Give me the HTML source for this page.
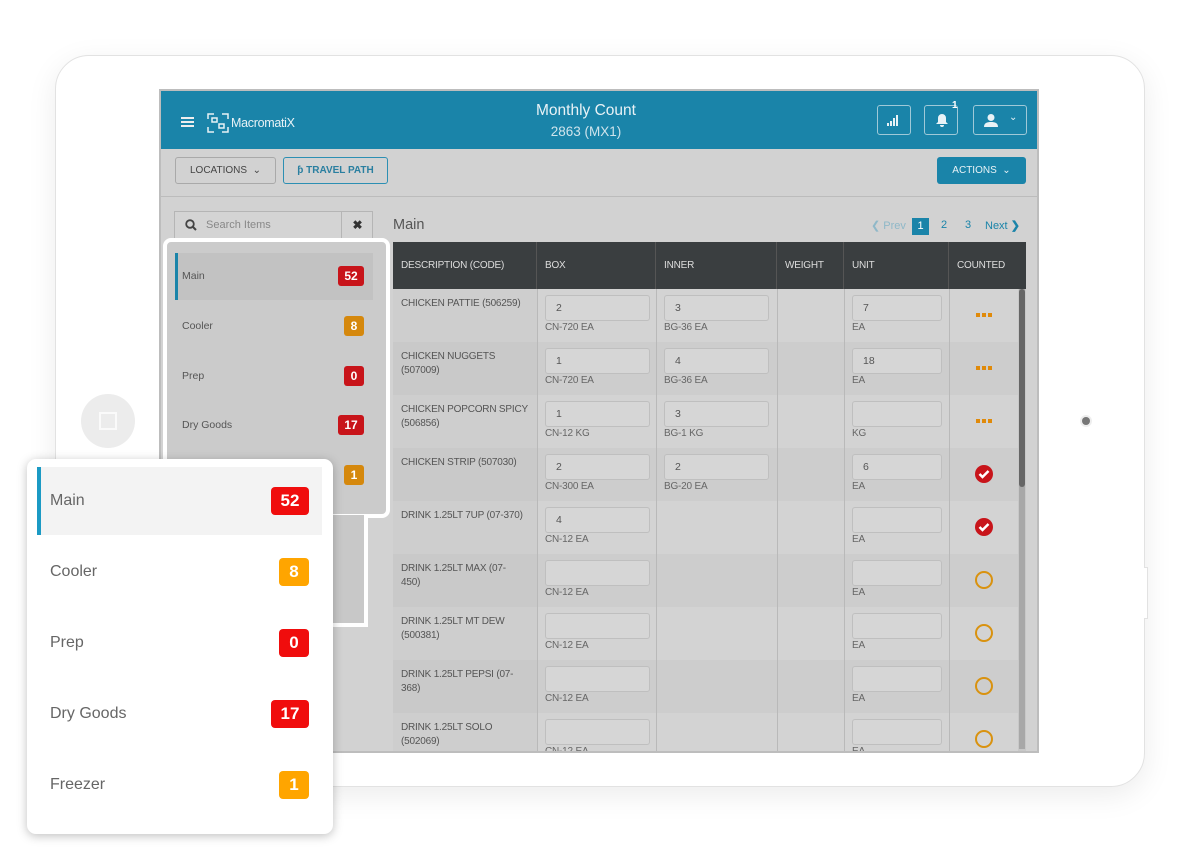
<!DOCTYPE html>
<html><head><meta charset="utf-8"><style>
*{box-sizing:border-box;margin:0;padding:0}
body{width:1200px;height:848px;background:#fff;position:relative;overflow:hidden;font-family:"Liberation Sans",sans-serif;color:#555}
.a{position:absolute}
.dev{left:55px;top:55px;width:1090px;height:732px;border:1px solid #e2e2e2;border-radius:34px;background:#fff;box-shadow:0 8px 30px rgba(0,0,0,.08)}
.scr{left:159px;top:89px;width:880px;height:664px;background:#d2d2d2;border:2px solid #bdbdbd;overflow:hidden}
.hdr{left:0;top:0;width:876px;height:58px;background:#1a84a9;color:#e8f2f6}
.btn{border:1px solid #a9a9a9;border-radius:3px;font-size:10px;color:#444;background:#d2d2d2;text-align:center;line-height:25px}
.ib{border:1px solid #9fc9d8;border-radius:3px;width:34px;height:30px;top:14px}
.th{position:absolute;top:0;height:47px;line-height:47px;font-size:10px;color:#ddd;padding-left:8px;border-right:1px solid #555;letter-spacing:-.2px}
.cell{font-size:10px;color:#555;letter-spacing:-.2px}
.in{position:absolute;width:105px;height:26px;border:1px solid #bfbfbf;border-radius:3px;background:#d6d6d6;font-size:10.5px;line-height:24px;padding-left:10px;color:#555}
.sub{position:absolute;font-size:10px;color:#666;letter-spacing:-.2px}
.bd{position:absolute;height:20px;border-radius:3px;color:#fff;font-weight:bold;font-size:12px;text-align:center;line-height:20px}
.bg{position:absolute;height:28px;border-radius:4px;color:#fff;font-weight:bold;font-size:17px;text-align:center;line-height:28px}
.li{position:absolute;left:23px;font-size:16px;color:#666}
</style></head><body>
<div class="a dev"></div>
<div class="a" style="left:1144px;top:567px;width:4px;height:52px;border:1px solid #e2e2e2;border-left:none;background:#fff"></div>
<div class="a" style="left:81px;top:394px;width:54px;height:54px;border-radius:50%;background:#ececec"></div>
<div class="a" style="left:99px;top:412px;width:18px;height:18px;border:2px solid #fafafa"></div>
<div class="a" style="left:1080px;top:415px;width:12px;height:12px;border-radius:50%;background:#eee"></div>
<div class="a" style="left:1082px;top:417px;width:8px;height:8px;border-radius:50%;background:#777"></div>

<div class="a scr">
 <div class="a hdr">
  <div class="a" style="left:20px;top:26px;width:13px;height:2px;background:#eee;box-shadow:0 4px 0 #eee,0 8px 0 #eee"></div>
  <svg class="a" style="left:46px;top:22px" width="22" height="20" viewBox="0 0 22 20" fill="none" stroke="#e8f2f6" stroke-width="1.5"><path d="M1 6V1h6M15 1h6v5M21 14v5h-6M7 19H1v-5M5 5h5v4H5zM12 11h5v4h-5z"/></svg>
  <div class="a" style="left:70px;top:25px;font-size:12.5px;letter-spacing:-.3px">MacromatiX</div>
  <div class="a" style="left:330px;top:11px;width:190px;text-align:center;font-size:15.5px">Monthly Count</div>
  <div class="a" style="left:330px;top:33px;width:190px;text-align:center;font-size:13.5px;color:#cfe4ec">2863 (MX1)</div>
  <div class="a ib" style="left:716px"><svg class="a" style="left:9px;top:8px" width="14" height="12"><rect x="0" y="9" width="2" height="3" fill="#e8f2f6"/><rect x="3" y="7" width="2" height="5" fill="#e8f2f6"/><rect x="6" y="4" width="2" height="8" fill="#e8f2f6"/><rect x="9" y="1" width="2" height="11" fill="#e8f2f6"/></svg></div>
  <div class="a ib" style="left:763px"><svg class="a" style="left:10px;top:7px" width="14" height="15"><path d="M7 1a4 4 0 0 1 4 4v4l2 2H1l2-2V5a4 4 0 0 1 4-4zM5 12h4a2 2 0 0 1-4 0z" fill="#e8f2f6"/></svg></div>
  <div class="a" style="left:791px;top:9px;font-size:10px;color:#fff;font-weight:bold">1</div>
  <div class="a ib" style="left:812px;width:54px"><svg class="a" style="left:10px;top:7px" width="14" height="14"><circle cx="7" cy="4.5" r="3.5" fill="#e8f2f6"/><path d="M0 14c0-4 3-5 7-5s7 1 7 5z" fill="#e8f2f6"/></svg><div class="a" style="left:35px;top:6px;font-size:10px">&#8964;</div></div>
 </div>
 <div class="a btn" style="left:14px;top:66px;width:101px;height:27px">LOCATIONS &nbsp;&#8964;</div>
 <div class="a btn" style="left:122px;top:66px;width:105px;height:27px;border-color:#2c8fb3;color:#2a7fa0;font-weight:bold">&#421; TRAVEL PATH</div>
 <div class="a" style="left:776px;top:66px;width:89px;height:27px;background:#1a84a9;border-radius:3px;color:#e8f2f6;font-size:10px;line-height:27px;text-align:center">ACTIONS &nbsp;&#8964;</div>
 <div class="a" style="left:0;top:105px;width:876px;height:1px;background:#bcbcbc"></div>
 <div class="a" style="left:13px;top:120px;width:199px;height:28px;border:1px solid #b5b5b5;background:#d4d4d4"></div>
 <div class="a" style="left:180px;top:120px;width:32px;height:28px;border-left:1px solid #b5b5b5;text-align:center;line-height:28px;font-size:12px;font-weight:bold;color:#333">&#10006;</div>
 <svg class="a" style="left:24px;top:128px" width="12" height="12"><circle cx="5" cy="5" r="3.8" stroke="#444" stroke-width="1.8" fill="none"/><path d="M8 8l3 3" stroke="#444" stroke-width="2"/></svg>
 <div class="a" style="left:45px;top:128px;font-size:11px;color:#888">Search Items</div>
 <div class="a" style="left:232px;top:126px;font-size:14.5px;color:#555">Main</div>
 <div class="a" style="left:710px;top:128px;font-size:11px;color:#8fb8c8">&#10094; Prev</div>
 <div class="a" style="left:751px;top:127px;width:17px;height:17px;background:#1a84a9;color:#fff;font-size:11px;text-align:center;line-height:17px">1</div>
 <div class="a" style="left:780px;top:128px;font-size:11px;color:#1a84a9">2</div>
 <div class="a" style="left:804px;top:128px;font-size:11px;color:#1a84a9">3</div>
 <div class="a" style="left:824px;top:128px;font-size:11px;color:#1a84a9">Next <b>&#10095;</b></div>

 <div class="a" style="left:232px;top:151px;width:633px;height:520px;overflow:hidden">
  <div class="a" style="left:0;top:0;width:633px;height:47px;background:#3a3e40"></div>
  <div class="th" style="left:0;width:144px">DESCRIPTION (CODE)</div>
  <div class="th" style="left:144px;width:119px">BOX</div>
  <div class="th" style="left:263px;width:121px">INNER</div>
  <div class="th" style="left:384px;width:67px">WEIGHT</div>
  <div class="th" style="left:451px;width:105px">UNIT</div>
  <div class="th" style="left:556px;width:77px;border:none">COUNTED</div>
  <div id="rows"></div>
 </div>
</div>

<div class="a" style="left:163px;top:238px;width:227px;height:280px;border:4px solid #fff;border-radius:8px;background:#cbcbcb"></div>
<div class="a" style="left:175px;top:253px;width:198px;height:47px;background:#c2c2c2"></div>
<div class="a" style="left:175px;top:253px;width:3px;height:47px;background:#1a84a9"></div>
<div class="a" style="left:182px;top:270px;font-size:10.5px;color:#555">Main</div>
<div class="a" style="left:182px;top:320px;font-size:10.5px;color:#555">Cooler</div>
<div class="a" style="left:182px;top:370px;font-size:10.5px;color:#555">Prep</div>
<div class="a" style="left:182px;top:419px;font-size:10.5px;color:#555">Dry Goods</div>
<div class="bd" style="left:338px;top:266px;width:26px;background:#c8141a">52</div>
<div class="bd" style="left:344px;top:316px;width:20px;background:#d5880d">8</div>
<div class="bd" style="left:344px;top:366px;width:20px;background:#c8141a">0</div>
<div class="bd" style="left:338px;top:415px;width:26px;background:#c8141a">17</div>
<div class="bd" style="left:344px;top:465px;width:20px;background:#d5880d">1</div>
<div class="a" style="left:330px;top:515px;width:38px;height:112px;border:4px solid #fff;border-top:none;border-left:none;background:#c8c8c8"></div>

<div class="a" style="left:27px;top:459px;width:306px;height:375px;background:#fff;border-radius:9px;box-shadow:0 2px 10px rgba(0,0,0,.25)">
 <div class="a" style="left:10px;top:8px;width:285px;height:68px;background:#f3f3f3"></div>
 <div class="a" style="left:10px;top:8px;width:4px;height:68px;background:#1b9ac4"></div>
 <div class="li" style="top:33px">Main</div>
 <div class="li" style="top:104px">Cooler</div>
 <div class="li" style="top:175px">Prep</div>
 <div class="li" style="top:246px">Dry Goods</div>
 <div class="li" style="top:317px">Freezer</div>
 <div class="bg" style="left:244px;top:28px;width:38px;background:#f00d0d">52</div>
 <div class="bg" style="left:252px;top:99px;width:30px;background:#ffa500">8</div>
 <div class="bg" style="left:252px;top:170px;width:30px;background:#f00d0d">0</div>
 <div class="bg" style="left:244px;top:241px;width:38px;background:#f00d0d">17</div>
 <div class="bg" style="left:252px;top:312px;width:30px;background:#ffa500">1</div>
</div>

<script>
var R=[["CHICKEN PATTIE (506259)","2","CN-720 EA","3","BG-36 EA","7","EA","d"],
["CHICKEN NUGGETS<br>(507009)","1","CN-720 EA","4","BG-36 EA","18","EA","d"],
["CHICKEN POPCORN SPICY<br>(506856)","1","CN-12 KG","3","BG-1 KG","","KG","d"],
["CHICKEN STRIP (507030)","2","CN-300 EA","2","BG-20 EA","6","EA","c"],
["DRINK 1.25LT 7UP (07-370)","4","CN-12 EA",null,null,"","EA","c"],
["DRINK 1.25LT MAX (07-<br>450)","","CN-12 EA",null,null,"","EA","o"],
["DRINK 1.25LT MT DEW<br>(500381)","","CN-12 EA",null,null,"","EA","o"],
["DRINK 1.25LT PEPSI (07-<br>368)","","CN-12 EA",null,null,"","EA","o"],
["DRINK 1.25LT SOLO<br>(502069)","","CN-12 EA",null,null,"","EA","o"]];
var h="";
R.forEach(function(r,i){var y=47+i*53;
h+='<div class="a" style="left:0;top:'+y+'px;width:625px;height:53px;background:'+(i%2?'#cdcdcd':'#d3d3d3')+'"></div>';
h+='<div class="a" style="left:0;top:'+y+'px;width:144px;height:53px;background:'+(i%2?'#c9c9c9':'#cecece')+'"></div>';
h+='<div class="a cell" style="left:8px;top:'+(y+8)+'px;line-height:14px;width:134px;overflow:hidden">'+r[0]+'</div>';
h+='<div class="in" style="left:152px;top:'+(y+6)+'px">'+r[1]+'</div><div class="sub" style="left:152px;top:'+(y+33)+'px">'+r[2]+'</div>';
if(r[3]!==null)h+='<div class="in" style="left:271px;top:'+(y+6)+'px">'+r[3]+'</div><div class="sub" style="left:271px;top:'+(y+33)+'px">'+r[4]+'</div>';
h+='<div class="in" style="left:459px;top:'+(y+6)+'px;width:90px">'+r[5]+'</div><div class="sub" style="left:459px;top:'+(y+33)+'px">'+r[6]+'</div>';
var cx=591,cy=y+26;
if(r[7]=="d")h+='<div class="a" style="left:'+(cx-8)+'px;top:'+(cy-2)+'px;width:16px;height:4px;background:repeating-linear-gradient(90deg,#e08a0a 0 4px,transparent 4px 6px)"></div>';
if(r[7]=="c")h+='<svg class="a" style="left:'+(cx-9)+'px;top:'+(cy-9)+'px" width="18" height="18"><circle cx="9" cy="9" r="9" fill="#c8141a"/><path d="M4.5 9l3 3 6-6" stroke="#fff" stroke-width="2.5" fill="none"/></svg>';
if(r[7]=="o")h+='<div class="a" style="left:'+(cx-9)+'px;top:'+(cy-9)+'px;width:18px;height:18px;border:2.5px solid #d9920f;border-radius:50%"></div>';
});
[144,263,384,451,556].forEach(function(x){h+='<div class="a" style="left:'+x+'px;top:47px;width:1px;height:480px;background:#b9b9b9"></div>'});
h+='<div class="a" style="left:625px;top:47px;width:8px;height:480px;background:#c8c8c8"></div><div class="a" style="left:626px;top:47px;width:6px;height:460px;background:#a8a8a8"></div><div class="a" style="left:626px;top:47px;width:6px;height:198px;background:#666;border-radius:3px"></div>';
document.getElementById('rows').innerHTML=h;
</script>
</body></html>
